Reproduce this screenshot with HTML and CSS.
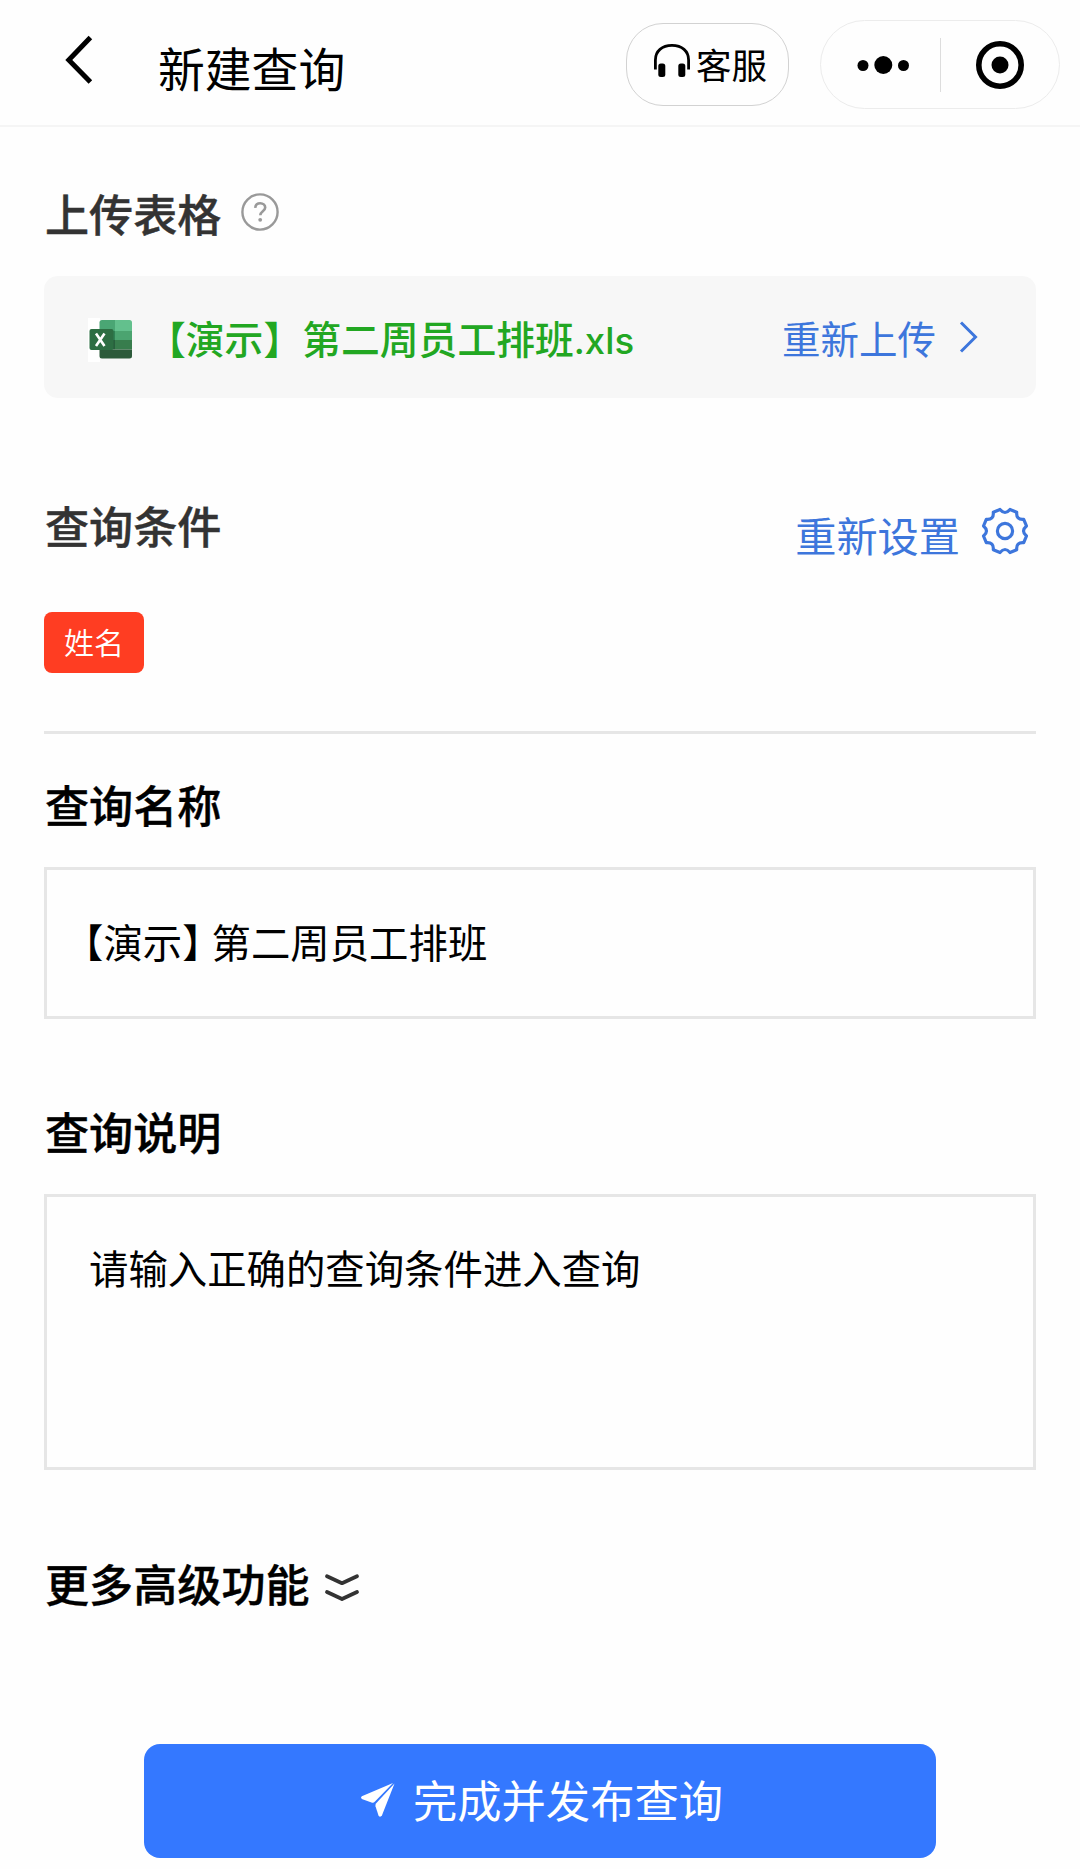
FILE: index.html
```html
<!DOCTYPE html>
<html lang="zh-CN">
<head>
<meta charset="utf-8">
<title>新建查询</title>
<link rel="stylesheet" href="styles.css">
</head>
<body>
<header class="navbar">
  <svg class="back" width="30" height="50" viewBox="0 0 30 50" fill="none" stroke="#000" stroke-width="5"><path d="M26.4 2.600 4.800 25l21.600 22"/></svg>
  <h1 class="navbar-title">新建查询</h1>
  <button class="service">
    <svg width="36" height="34" viewBox="0 0 36 34"><path d="M1.400 25.500V16C1.400 7 8 1.400 18 1.400S34.600 7 34.600 16v9.500" fill="none" stroke="#000" stroke-width="2.800"/><rect x="4.300" y="19.500" width="7" height="13.500" rx="2.500"/><rect x="24.300" y="19.500" width="7" height="13.500" rx="2.500"/></svg>
    <span>客服</span>
  </button>
  <div class="capsule">
    <svg class="dots" width="54" height="20" viewBox="0 0 54 20"><circle cx="7" cy="10.500" r="5.500"/><circle cx="27.300" cy="10" r="9"/><circle cx="47.500" cy="10.500" r="5.500"/></svg>
    <i class="capsule-line"></i>
    <svg class="target" width="50" height="50" viewBox="0 0 50 50"><circle cx="25" cy="25" r="21.200" fill="none" stroke="#000" stroke-width="5.600"/><circle cx="25" cy="25" r="8.500"/></svg>
  </div>
</header>
<main class="page">
  <section class="upload">
    <h2 class="heading soft">上传表格
      <svg class="help" width="40" height="40" viewBox="0 0 40 40" fill="none" stroke="#999" stroke-width="2.400"><circle cx="20" cy="20" r="17.600"/><path d="M15.200 15.800c.3-3 2.300-4.600 5-4.600 2.900 0 5 1.800 5 4.300 0 3.600-4.900 3.800-4.900 7.700" stroke-width="2.600"/><circle cx="20.200" cy="27.800" r="1.900" fill="#999" stroke="none"/></svg>
    </h2>
    <div class="file">
      <svg class="excel" width="44" height="44" viewBox="0 0 44 44">
        <path fill="#fff" d="M0 0h12v44H0z"/>
        <path fill="#4aa674" d="M14 2h13v11H11.500V4.500A2.500 2.500 0 0 1 14 2z"/>
        <path fill="#63c08d" d="M27 2h14.500A2.500 2.500 0 0 1 44 4.500V13H27z"/>
        <path fill="#2f8154" d="M11.500 13H27v9H11.500z"/><path fill="#4ba470" d="M27 13h17v9H27z"/>
        <path fill="#285f3d" d="M11.500 22H27v9.500H11.500z"/><path fill="#387d4d" d="M27 22h17v9.500H27z"/>
        <path fill="#2c5a3a" d="M11.500 31.500H44V38a2.500 2.500 0 0 1-2.500 2.500H14a2.500 2.500 0 0 1-2.500-2.500z"/>
        <rect x="1.500" y="11" width="24" height="21" rx="2" fill="#2d6e43"/>
        <path d="m8 15.500 8.500 12.500M16.500 15.500 8 28" stroke="#fff" stroke-width="2.600" fill="none"/>
      </svg>
      <span class="file-name">【演示】第二周员工排班<span class="ext">.xls</span></span>
      <a class="reupload">重新上传
        <svg width="22" height="34" viewBox="0 0 22 34" fill="none" stroke="#3d76dc" stroke-width="3"><path d="m3 2.500 14.500 14.500L3 31.500"/></svg>
      </a>
    </div>
  </section>
  <section class="conditions">
    <h2 class="heading soft">查询条件</h2>
    <a class="reset">重新设置
      <svg width="48" height="48" viewBox="-24 -24 48 48" fill="none" stroke="#3d76dc" stroke-width="3.200" stroke-linejoin="round"><path d="M-5-21.500Q0-15.500 5-21.500L11.700-18.700Q11-11 18.700-11.700L21.500-5Q15.500 0 21.500 5L18.700 11.700Q11 11 11.700 18.700L5 21.500Q0 15.500-5 21.500L-11.700 18.700Q-11 11-18.700 11.700L-21.500 5Q-15.500 0-21.500-5L-18.700-11.700Q-11-11-11.700-18.700Z"/><circle r="7.600"/></svg>
    </a>
  </section>
  <span class="tag">姓名</span>
  <hr class="rule">
  <h2 class="heading">查询名称</h2>
  <div class="field name-field"><span class="bracketed">【演示】</span>第二周员工排班</div>
  <h2 class="heading note-heading">查询说明</h2>
  <div class="field note-field">请输入正确的查询条件进入查询</div>
  <h2 class="heading more">更多高级功能
    <svg width="36" height="30" viewBox="0 0 36 30" fill="none" stroke="#333" stroke-width="3.800" stroke-linecap="round" stroke-linejoin="round"><path d="m3 3.200 15 7 15-7M3 19l15 7 15-7"/></svg>
  </h2>
  <button class="submit">
    <svg width="36" height="36" viewBox="0 0 36 36" fill="#fff"><path d="M33 1 1.800 14.200Q.2 15.500 1.800 16.900L11.500 20.500Q13.500 21.200 15 19.500Z"/><path d="M34.500 1.500 16.200 21.200Q15 22.600 15.500 24.200L18.500 33.500Q20.200 36 22 33.200Z"/></svg>
    <span>完成并发布查询</span>
  </button>
</main>
</body>
</html>
```
FILE: styles.css
```css
* { box-sizing: border-box; }

body {
  margin: 0;
  background: #fefefe;
  color: #000;
  font-family: "Noto Sans CJK SC", sans-serif;
}

svg { display: block; flex: none; }
h1, h2 { margin: 0; }
button { padding: 0; background: none; font: inherit; color: inherit; }

.navbar {
  display: flex;
  align-items: flex-start;
  height: 127px;
  padding: 20px 20px 0 64px;
  border-bottom: 2px solid #f5f5f5;
}
.back { margin-top: 15px; }
.navbar-title {
  margin: 17px auto 0 64px;
  font-size: 46.800px;
  line-height: 60px;
  font-weight: 400;
}
.service {
  display: flex;
  align-items: center;
  width: 163px;
  height: 83px;
  margin-top: 3px;
  padding-left: 27px;
  gap: 6px;
  border: 1px solid #d2d2d2;
  border-radius: 37px;
  font-size: 35.500px;
  line-height: 40px;
}
.service svg { margin-top: -8px; }
.service span { margin-top: -1px; white-space: nowrap; }
.capsule {
  display: flex;
  align-items: center;
  width: 240px;
  height: 89px;
  margin-left: 31px;
  padding: 0 34px 0 35px;
  border: 1px solid #ececec;
  border-radius: 45px;
}
.capsule-line {
  width: 1px;
  height: 54px;
  margin: 0 34px 0 30px;
  background: #ddd;
}

.page { padding: 56px 44px 0; }
.heading {
  display: flex;
  align-items: center;
  padding-left: 1px;
  font-size: 44.100px;
  line-height: 60px;
  font-weight: 500;
  -webkit-text-stroke: .4px currentColor;
}
.soft { color: #333; }
.help { margin: -3px 0 0 19px; }

.file {
  display: flex;
  align-items: center;
  height: 122px;
  margin-top: 33px;
  padding: 0 56px 0 44px;
  background: #f7f7f7;
  border-radius: 14px;
}
.excel { margin-top: 6px; }
.file-name {
  margin: -1px auto 0 15px;
  color: #22a722;
  font-size: 38.800px;
  font-weight: 500;
}
.ext { font-family: Inter, sans-serif; font-size: 36.500px; }
.reupload, .reset {
  display: flex;
  align-items: center;
  color: #3d76dc;
  font-size: 38.500px;
}
.reupload svg { margin: 0 0 0 22px; }

.conditions {
  display: flex;
  justify-content: space-between;
  align-items: flex-start;
  height: 214px;
  padding-top: 99px;
}
.conditions .heading { margin-top: -2px; }
.reset { margin: 7px 7px 0 0; font-size: 41.200px; line-height: 60px; }
.reset svg { margin: -7px 0 0 21px; }

.tag {
  display: block;
  width: 100px;
  height: 61px;
  border-radius: 8px;
  background: #ff3d22;
  color: #fff;
  font-size: 30px;
  font-weight: 350;
  line-height: 58px;
  text-align: center;
}
.rule {
  height: 3px;
  margin: 58px 0 40px;
  border: 0;
  background: #e6e6e6;
}
.field {
  border: 3px solid #e6e6e6;
  font-size: 39.400px;
}
.name-field {
  height: 152px;
  margin-top: 33px;
  padding-left: 17px;
  line-height: 142px;
}
.bracketed { margin-right: -10px; }
.note-heading { margin-top: 82px; }
.note-field {
  height: 276px;
  margin-top: 33px;
  padding: 40px 0 0 42px;
  line-height: 60px;
}
.more { margin-top: 83px; }
.more svg { margin: 9px 0 0 14px; }

.submit {
  display: flex;
  align-items: center;
  justify-content: center;
  width: 792px;
  height: 114px;
  margin: 131px auto 0;
  border: 0;
  border-radius: 16px;
  background: #3478ff;
  color: #fff;
  font-size: 44.300px;
  line-height: 60px;
  gap: 17px;
}
.submit svg { margin: -3px 0 0 3px; }
.submit span { margin-top: -5px; }
```
